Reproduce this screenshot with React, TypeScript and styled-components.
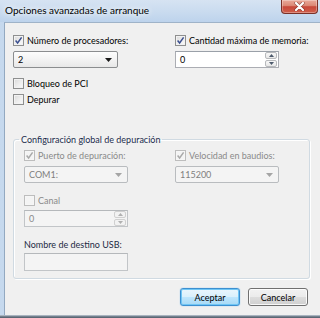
import React from "react";
import styled, { createGlobalStyle } from "styled-components";

const FONT = `Lato, "Liberation Sans", Arial, sans-serif`;

const Global = createGlobalStyle`
  html, body { margin: 0; padding: 0; width: 320px; height: 318px; overflow: hidden; background: #f0f0f0; }
  #root { width: 320px; height: 318px; }
  * { box-sizing: border-box; }
`;

const Window = styled.div`
  width: 320px;
  height: 318px;
  display: flex;
  flex-direction: column;
  font-family: ${FONT};
  font-size: 9px;
  color: #000;
  background: #bcd2ea;
  overflow: hidden;
`;

const TitleBar = styled.div`
  height: 22px;
  flex: none;
  display: flex;
  align-items: flex-start;
  padding-left: 5px;
  background: linear-gradient(to bottom, #d6e3f2 0%, #c9dbef 55%, #bdd3ec 100%);
`;

const TitleText = styled.span`
  margin-top: 4px;
  font-size: 10px;
  line-height: 13px;
  color: #000;
  text-shadow: 0 0 5px #fff, 0 0 9px rgba(255, 255, 255, 0.95);
`;

const CloseButton = styled.div`
  margin-left: auto;
  margin-right: 2px;
  width: 37px;
  height: 14px;
  border: 1px solid #7a3128;
  border-top: none;
  border-radius: 0 0 4px 4px;
  background: linear-gradient(to bottom, #e9a99a 0%, #dc8a77 42%, #c8483a 52%, #d0604c 100%);
  box-shadow: inset 0 0 0 1px rgba(255, 255, 255, 0.3);
  display: flex;
  align-items: center;
  justify-content: center;
`;

const Frame = styled.div`
  flex: 1;
  min-height: 0;
  min-width: 0;
  display: flex;
  padding-left: 4px;
  background: linear-gradient(to right, #c6d9ee 0%, #aac5e4 100%);
`;

const BottomEdge = styled.div`
  height: 3px;
  flex: none;
  background: linear-gradient(to bottom, #c9d3dd 0%, #7b8794 40%, #4f5b68 100%);
`;

const Panel = styled.div`
  flex: 1;
  min-width: 0;
  display: flex;
  flex-direction: column;
  background: #f0f0f0;
  border-left: 1px solid #93a9c1;
  border-top: 1px solid #9fb3c8;
  padding: 11px 10px 0 8px;
`;

const TwoCols = styled.div<{ $first: number }>`
  display: grid;
  grid-template-columns: ${(p) => p.$first}px minmax(0, 1fr);
`;

const Column = styled.div`
  display: flex;
  flex-direction: column;
  align-items: flex-start;
  min-width: 0;
`;

const CheckRow = styled.label<{ $disabled?: boolean; $gap?: number }>`
  display: flex;
  align-items: center;
  gap: 3px;
  height: 13px;
  line-height: 13px;
  margin-top: ${(p) => p.$gap ?? 0}px;
  color: ${(p) => (p.$disabled ? "#8a8a8a" : "#000")};
  white-space: nowrap;
`;

const Box = styled.span<{ $disabled?: boolean }>`
  width: 11px;
  height: 11px;
  flex: none;
  border: 1px solid ${(p) => (p.$disabled ? "#bdbdbd" : "#8e8f8f")};
  background: ${(p) =>
    p.$disabled
      ? "#f4f4f4"
      : "linear-gradient(135deg, #d9d9d9 0%, #eeeeee 55%, #fbfbfb 100%)"};
  box-shadow: inset 0 0 0 1px ${(p) => (p.$disabled ? "#f6f6f6" : "#f2f2f2")};
  display: flex;
  align-items: center;
  justify-content: center;
`;

const Combo = styled.div<{ $disabled?: boolean; $gap?: number; $w?: number }>`
  margin-top: ${(p) => p.$gap ?? 4}px;
  width: ${(p) => p.$w ?? 104}px;
  height: 17px;
  display: flex;
  align-items: center;
  justify-content: space-between;
  padding: 0 5px 0 4px;
  border: 1px solid ${(p) => (p.$disabled ? "#b9bcbf" : "#8b8d8f")};
  border-radius: 2px;
  color: ${(p) => (p.$disabled ? "#7f7f7f" : "#000")};
  background: ${(p) =>
    p.$disabled ? "#f4f4f4" : "linear-gradient(to bottom, #fdfdfd 0%, #f3f3f3 50%, #e8e8e8 100%)"};
`;

const Field = styled.div<{ $disabled?: boolean; $gap?: number; $h?: number }>`
  margin-top: ${(p) => p.$gap ?? 4}px;
  width: 104px;
  height: ${(p) => p.$h ?? 17}px;
  display: flex;
  align-items: stretch;
  border: 1px solid ${(p) => (p.$disabled ? "#c2c5c8" : "#abadb3")};
  border-top-color: ${(p) => (p.$disabled ? "#b5b8bb" : "#9aa0a8")};
  background: ${(p) => (p.$disabled ? "#f4f4f4" : "#fff")};
  color: ${(p) => (p.$disabled ? "#8a8a8a" : "#000")};
`;

const FieldValue = styled.span`
  flex: 1;
  display: flex;
  align-items: center;
  padding-left: 4px;
`;

const SpinStack = styled.div`
  width: 13px;
  display: flex;
  flex-direction: column;
  gap: 1px;
  padding: 0 1px 0 0;
`;

const SpinBtn = styled.div<{ $disabled?: boolean }>`
  flex: 1;
  display: flex;
  align-items: center;
  justify-content: center;
  border: 1px solid ${(p) => (p.$disabled ? "#d0d0d0" : "#b7b9bc")};
  border-radius: 2px;
  background: ${(p) =>
    p.$disabled ? "#f2f2f2" : "linear-gradient(to bottom, #f7f7f7 0%, #e8e8e8 100%)"};
`;

const Group = styled.fieldset`
  margin: 27px 0 0 0;
  padding: 3px 10px 7px 10px;
  min-width: 0;
  border: 1px solid #d0dae2;
  border-radius: 3px;
  box-shadow: inset 1px 1px 0 #fff, 1px 1px 0 #fff;
`;

const GroupLabel = styled.legend`
  margin-left: -5px;
  padding: 0 2px;
  line-height: 13px;
  color: #1c2c4c;
`;

const PlainLabel = styled.div<{ $gap?: number }>`
  margin-top: ${(p) => p.$gap ?? 0}px;
  height: 13px;
  line-height: 13px;
  color: #1c2a44;
  white-space: nowrap;
`;

const ButtonRow = styled.div`
  margin-top: 9px;
  display: flex;
  justify-content: flex-end;
  gap: 8px;
  padding-right: 2px;
`;

const Button = styled.button<{ $default?: boolean }>`
  width: 60px;
  height: 18px;
  padding: 0;
  font-family: ${FONT};
  font-size: 9px;
  color: #000;
  border-radius: 3px;
  border: 1px solid ${(p) => (p.$default ? "#3c8fd0" : "#707070")};
  background: ${(p) =>
    p.$default
      ? "linear-gradient(to bottom, #eaf6fd 0%, #d9f0fc 50%, #bee6fd 51%, #a7d9f5 100%)"
      : "linear-gradient(to bottom, #f2f2f2 0%, #ebebeb 50%, #dddddd 51%, #cfcfcf 100%)"};
  box-shadow: ${(p) =>
    p.$default
      ? "inset 0 0 0 1px #6fc6f5, 0 0 1px #48a6e8"
      : "inset 0 0 0 1px rgba(255,255,255,0.85)"};
`;

const Check = ({ checked, disabled }: { checked?: boolean; disabled?: boolean }) => (
  <Box $disabled={disabled}>
    {checked && (
      <svg width="9" height="9" viewBox="0 0 9 9">
        <path
          d="M1.6 4.6 L3.6 7 L7.6 1.4"
          fill="none"
          stroke={disabled ? "#a9a9a9" : "#3b4f8f"}
          strokeWidth="1.5"
        />
      </svg>
    )}
  </Box>
);

const DownArrow = ({ disabled }: { disabled?: boolean }) => (
  <svg width="7" height="4" viewBox="0 0 7 4">
    <path d="M0 0 H7 L3.5 4 Z" fill={disabled ? "#a5a5a5" : "#1a1a1a"} />
  </svg>
);

const Tri = ({ up, disabled }: { up?: boolean; disabled?: boolean }) => (
  <svg width="5" height="3" viewBox="0 0 5 3">
    <path d={up ? "M0 3 H5 L2.5 0 Z" : "M0 0 H5 L2.5 3 Z"} fill={disabled ? "#b0b0b0" : "#4d5a6c"} />
  </svg>
);

const Spinner = ({ value, disabled, gap }: { value: string; disabled?: boolean; gap?: number }) => (
  <Field $disabled={disabled} $gap={gap}>
    <FieldValue>{value}</FieldValue>
    <SpinStack>
      <SpinBtn $disabled={disabled}>
        <Tri up disabled={disabled} />
      </SpinBtn>
      <SpinBtn $disabled={disabled}>
        <Tri disabled={disabled} />
      </SpinBtn>
    </SpinStack>
  </Field>
);

export default function App() {
  return (
    <>
      <Global />
      <Window>
        <TitleBar>
          <TitleText>Opciones avanzadas de arranque</TitleText>
          <CloseButton>
            <svg width="11" height="9" viewBox="0 0 11 9">
              <path d="M2 1 L9 8 M9 1 L2 8" stroke="#5a1f18" strokeWidth="3.4" strokeLinecap="round" opacity="0.55" />
              <path d="M2 1 L9 8 M9 1 L2 8" stroke="#fff" strokeWidth="2.2" strokeLinecap="round" />
            </svg>
          </CloseButton>
        </TitleBar>
        <Frame>
          <Panel>
            <TwoCols $first={162}>
              <Column>
                <CheckRow>
                  <Check checked />
                  Número de procesadores:
                </CheckRow>
                <Combo $w={105}>
                  <span>2</span>
                  <DownArrow />
                </Combo>
                <CheckRow $gap={9}>
                  <Check />
                  Bloqueo de PCI
                </CheckRow>
                <CheckRow $gap={3}>
                  <Check />
                  Depurar
                </CheckRow>
              </Column>
              <Column>
                <CheckRow>
                  <Check checked />
                  Cantidad máxima de memoria:
                </CheckRow>
                <Spinner value="0" />
              </Column>
            </TwoCols>

            <Group>
              <GroupLabel>Configuración global de depuración</GroupLabel>
              <TwoCols $first={151}>
                <Column>
                  <CheckRow $disabled>
                    <Check checked disabled />
                    Puerto de depuración:
                  </CheckRow>
                  <Combo $disabled>
                    <span>COM1:</span>
                    <DownArrow disabled />
                  </Combo>
                  <CheckRow $disabled $gap={11}>
                    <Check disabled />
                    Canal
                  </CheckRow>
                  <Spinner value="0" disabled gap={3} />
                  <PlainLabel $gap={11}>Nombre de destino USB:</PlainLabel>
                  <Field $disabled $gap={2} $h={18} />
                </Column>
                <Column>
                  <CheckRow $disabled>
                    <Check checked disabled />
                    Velocidad en baudios:
                  </CheckRow>
                  <Combo $disabled>
                    <span>115200</span>
                    <DownArrow disabled />
                  </Combo>
                </Column>
              </TwoCols>
            </Group>

            <ButtonRow>
              <Button $default>Aceptar</Button>
              <Button>Cancelar</Button>
            </ButtonRow>
          </Panel>
        </Frame>
        <BottomEdge />
      </Window>
    </>
  );
}
